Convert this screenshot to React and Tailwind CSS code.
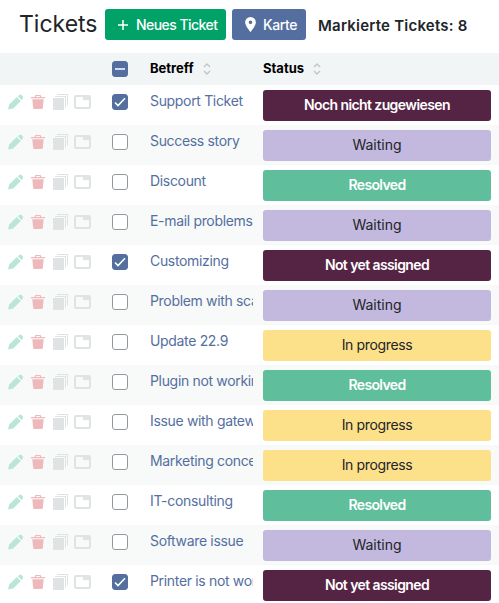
import React from 'react';
import clsx from 'clsx';

const STATUS = {
  waiting: 'bg-[#c3b8de] text-[#212529]',
  resolved: 'bg-[#5fbe9c] text-white font-semibold tracking-[-0.65px]',
  progress: 'bg-[#fde08a] text-[#212529] tracking-[-0.35px]',
  open: 'bg-[#552344] text-white font-semibold tracking-[-0.6px]',
};

const tickets = [
  { title: 'Support Ticket', status: 'open', label: 'Noch nicht zugewiesen', checked: true },
  { title: 'Success story', status: 'waiting', label: 'Waiting' },
  { title: 'Discount', status: 'resolved', label: 'Resolved' },
  { title: 'E-mail problems', status: 'waiting', label: 'Waiting' },
  { title: 'Customizing', status: 'open', label: 'Not yet assigned', checked: true },
  { title: 'Problem with scanner', status: 'waiting', label: 'Waiting' },
  { title: 'Update 22.9', status: 'progress', label: 'In progress' },
  { title: 'Plugin not working', status: 'resolved', label: 'Resolved' },
  { title: 'Issue with gateway', status: 'progress', label: 'In progress' },
  { title: 'Marketing concept', status: 'progress', label: 'In progress' },
  { title: 'IT-consulting', status: 'resolved', label: 'Resolved' },
  { title: 'Software issue', status: 'waiting', label: 'Waiting' },
  { title: 'Printer is not working', status: 'open', label: 'Not yet assigned', checked: true },
];

const PencilIcon = () => (
  <svg width="16" height="16" viewBox="0 0 16 16" className="shrink-0 fill-[#b9e6d6]">
    <path d="M0 15.5 1.2 10.4 8.8 3 12.8 7 5.2 14.4Z" />
    <path d="M9.8 2.2 11.4.9Q12.5.1 13.5 1L14.7 2.2Q15.6 3.2 14.8 4.4L13.6 6Z" />
  </svg>
);

const TrashIcon = () => (
  <svg width="14" height="16" viewBox="0 0 14 16" className="shrink-0 fill-[#efb9bb]">
    <path d="M0 3H3.6L4.4 1H9.6L10.4 3H14V4.3H0ZM5 3H9L8.7 2H5.3Z" fillRule="evenodd" />
    <path d="M1.3 5.3H12.7L11.8 14Q11.7 15 10.7 15H3.3Q2.3 15 2.2 14Z" />
  </svg>
);

const CopiesIcon = () => (
  <svg width="16" height="16" viewBox="0 0 16 16" className="shrink-0 fill-[#dfe3e4]">
    <path d="M0 4H11V16H0Z" />
    <path d="M2 2H13V13.5H12V3H2Z" />
    <path d="M4 0H15V11.5H14V1H4Z" />
  </svg>
);

const WindowIcon = () => (
  <svg width="17" height="16" viewBox="0 0 17 16" className="shrink-0">
    <rect x="1" y="2" width="15" height="12" rx="1.2" fill="none" stroke="#dfe3e4" strokeWidth="2" />
    <path d="M9 2H16V6H9Z" fill="#dfe3e4" />
  </svg>
);

const SortIcon = () => (
  <svg width="8" height="12" viewBox="0 0 8 12" fill="none" stroke="#c3c4c4" strokeWidth="1.4">
    <path d="M1 4 4 1 7 4M1 8 4 11 7 8" />
  </svg>
);

const Checkbox = ({ checked, partial }) => (
  <span
    className={clsx(
      'block h-4 w-4 shrink-0 rounded-[3px] border',
      checked || partial ? 'border-[#546f9f] bg-[#546f9f]' : 'border-[#8f999e] bg-white'
    )}
  >
    {(checked || partial) && (
      <svg width="14" height="14" viewBox="0 0 14 14" fill="none" strokeWidth="1.6">
        {partial ? <path d="M2 7H12" stroke="#d5dce8" strokeWidth="2" /> : <path d="M2 7.5 5 10.5 12 3.3" stroke="#fff" />}
      </svg>
    )}
  </span>
);

const TicketRow = ({ ticket, striped }) => (
  <div className={clsx('flex h-10 items-start', striped && 'bg-[#f8faf9]')}>
    <div className="flex w-28 shrink-0 pt-[9px] pl-2">
      <PencilIcon />
      <span className="w-[7px]" />
      <TrashIcon />
      <span className="w-2" />
      <CopiesIcon />
      <span className="w-[5px]" />
      <WindowIcon />
    </div>
    <div className="w-[38px] shrink-0 pt-[9px]">
      <Checkbox checked={ticket.checked} />
    </div>
    <div className="w-[103px] shrink-0 overflow-hidden pt-[6px] text-[14px] leading-5 tracking-[-0.33px] whitespace-nowrap text-[#546f9f]">
      {ticket.title}
    </div>
    <div className="ml-[10px] w-[228px] shrink-0 pt-[5px]">
      <div className={clsx('h-[31px] rounded-[3px] text-center text-[14px] leading-[30px]', STATUS[ticket.status])}>
        {ticket.label}
      </div>
    </div>
  </div>
);

export default function App() {
  return (
    <div className="h-[603px] w-[499px] overflow-hidden bg-white font-['Inter',sans-serif]">
      {/* Toolbar */}
      <div className="flex h-[53px] items-start pt-[9px] pl-[19px] whitespace-nowrap">
        <h1 className="w-[86px] text-[23px] leading-[30px] text-[#212529]">Tickets</h1>
        <button className="flex h-[31px] w-[121px] items-center rounded-[3px] bg-[#00a268] pl-[13px] text-[14px] font-medium tracking-[-0.55px] text-white">
          <svg width="10" height="10" viewBox="0 0 10 10" stroke="currentColor" strokeWidth="1.5" className="mr-2">
            <path d="M5 0V10M0 5H10" />
          </svg>
          Neues Ticket
        </button>
        <button className="ml-[6px] flex h-[31px] w-[74px] items-center rounded-[3px] bg-[#546f9f] pl-[13px] text-[14px] font-medium tracking-[-0.4px] text-white">
          <svg width="11" height="15" viewBox="0 0 10 14" fill="currentColor" className="mr-[7px]">
            <path fillRule="evenodd" d="M5 0A5 5 0 0 0 0 5C0 8.5 5 14 5 14S10 8.5 10 5A5 5 0 0 0 5 0ZM5 3.3A1.7 1.7 0 1 1 5 6.7A1.7 1.7 0 1 1 5 3.3Z" />
          </svg>
          Karte
        </button>
        <span className="ml-3 text-[15px] leading-[33px] font-semibold tracking-[0.22px] text-[#212529]">
          Markierte Tickets: 8
        </span>
      </div>

      {/* Column headings */}
      <div className="flex h-8 items-center bg-[#f1f5f6] text-[13px] font-bold text-black">
        <div className="ml-28 w-[38px]">
          <Checkbox partial />
        </div>
        <div className="flex w-[113px] items-center gap-[9px]">
          Betreff <SortIcon />
        </div>
        <div className="flex items-center gap-[9px]">
          Status <SortIcon />
        </div>
      </div>

      {tickets.map((ticket, i) => (
        <TicketRow key={ticket.title} ticket={ticket} striped={i % 2 === 1} />
      ))}
    </div>
  );
}
